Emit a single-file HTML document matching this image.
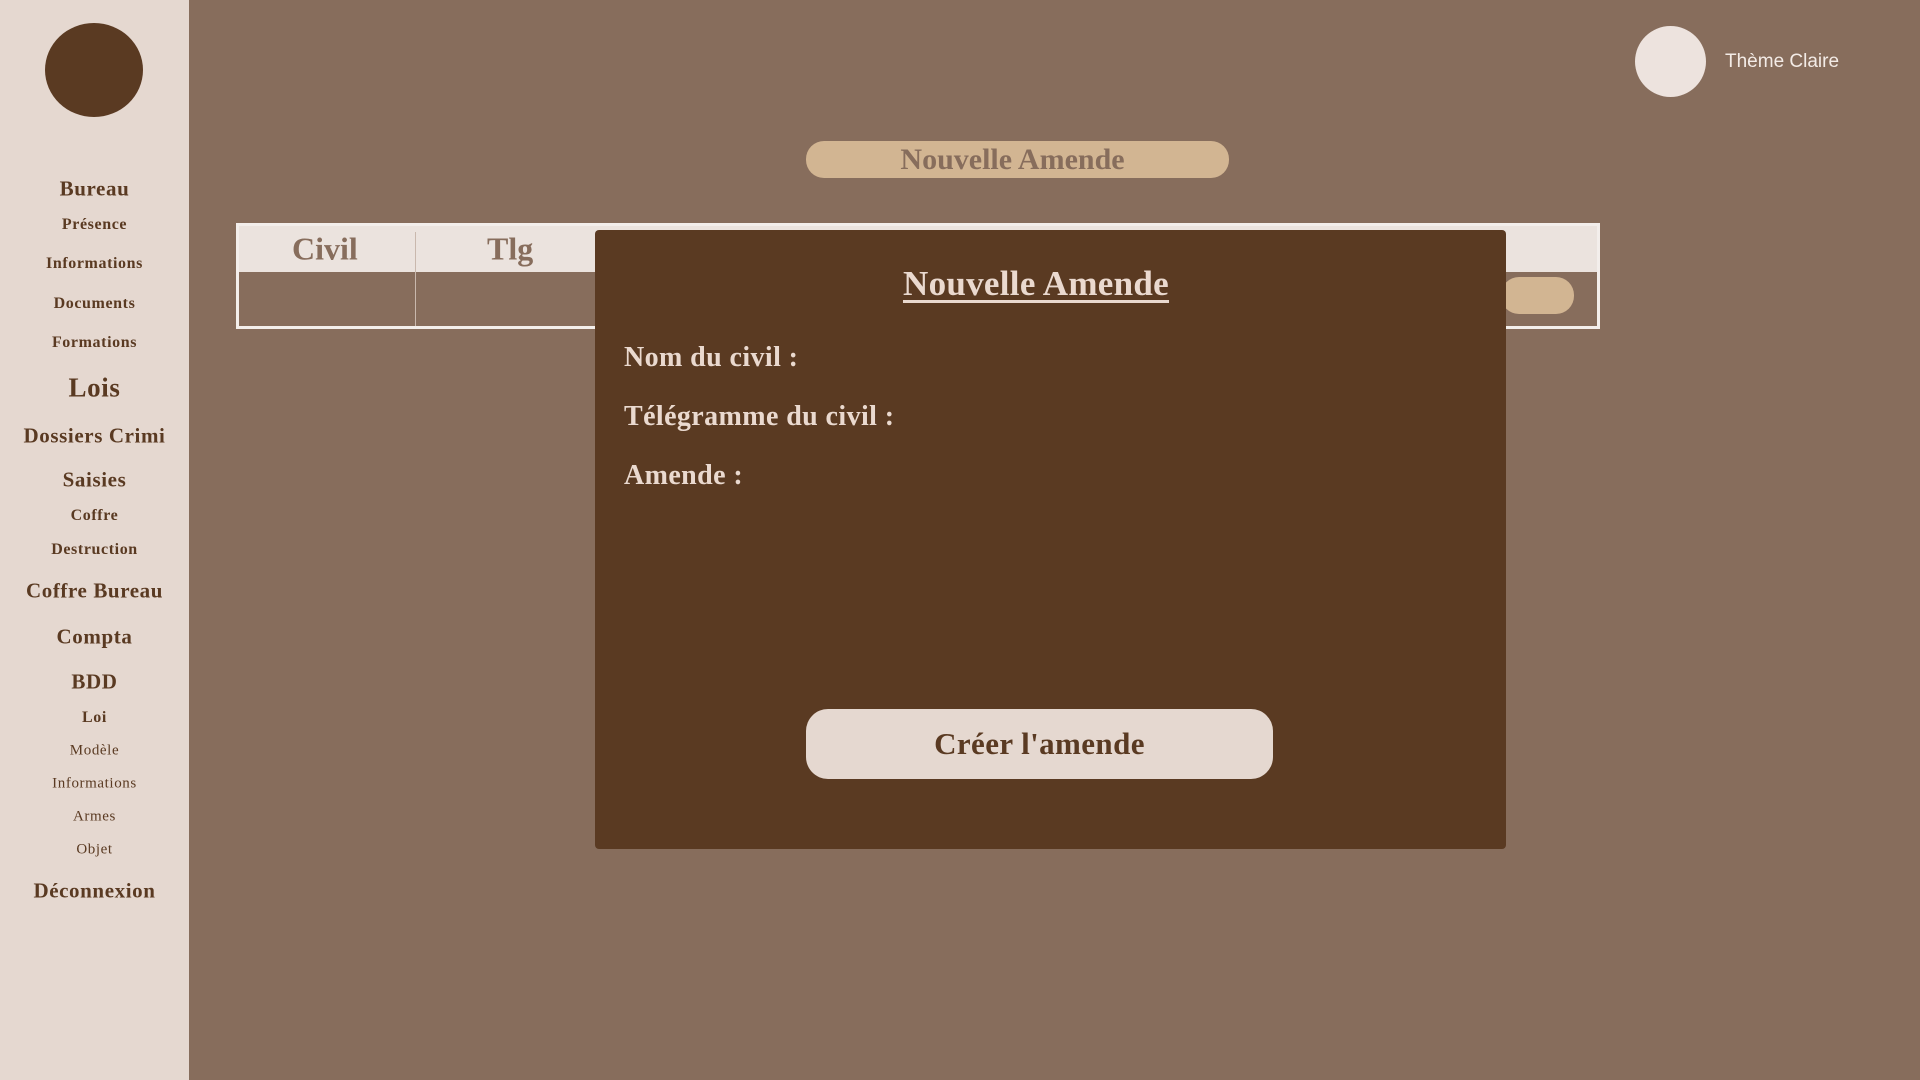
<!DOCTYPE html>
<html><head><meta charset="utf-8"><style>
*{margin:0;padding:0;box-sizing:border-box}
body{width:1920px;height:1080px;background:#876d5c;position:relative;overflow:hidden;font-family:"Liberation Serif",serif;font-weight:bold}
.side{position:absolute;left:0;top:0;width:189px;height:1080px;background:#e5d8d0}
.logo{position:absolute;left:45px;top:23px;width:98px;height:94px;border-radius:50%;background:#5a3a22}
.n{position:absolute;left:0;width:189px;text-align:center;color:#5a3a22;transform:translateY(-50%);white-space:nowrap;letter-spacing:0.6px}
.a{position:absolute;transform:translateY(-50%);white-space:nowrap}
</style></head><body>
<div class="side">
<div class="logo"></div>
<div class="n" style="top:189px;font-size:21px">Bureau</div>
<div class="n" style="top:225px;font-size:16px">Présence</div>
<div class="n" style="top:264px;font-size:16px">Informations</div>
<div class="n" style="top:304px;font-size:16px">Documents</div>
<div class="n" style="top:343px;font-size:16px">Formations</div>
<div class="n" style="top:388px;font-size:27px">Lois</div>
<div class="n" style="top:436px;font-size:21px">Dossiers Crimi</div>
<div class="n" style="top:480px;font-size:21px">Saisies</div>
<div class="n" style="top:516px;font-size:16px">Coffre</div>
<div class="n" style="top:550px;font-size:16px">Destruction</div>
<div class="n" style="top:591px;font-size:21px">Coffre Bureau</div>
<div class="n" style="top:637px;font-size:21px">Compta</div>
<div class="n" style="top:682px;font-size:21px">BDD</div>
<div class="n" style="top:718px;font-size:16px">Loi</div>
<div class="n" style="top:751px;font-size:15px;font-weight:normal">Modèle</div>
<div class="n" style="top:784px;font-size:15px;font-weight:normal">Informations</div>
<div class="n" style="top:817px;font-size:15px;font-weight:normal">Armes</div>
<div class="n" style="top:850px;font-size:15px;font-weight:normal">Objet</div>
<div class="n" style="top:891px;font-size:21px">Déconnexion</div>
</div>
<div style="position:absolute;left:1635px;top:26px;width:71px;height:71px;border-radius:50%;background:#ede3de"></div>
<div class="a" style="left:1725px;top:62px;font-family:'Liberation Sans',sans-serif;font-weight:normal;font-size:19px;color:#f3ebe6">Thème Claire</div>
<div style="position:absolute;left:806px;top:141px;width:423px;height:37px;border-radius:18px;background:#d2b592;color:#876d5c;font-size:30px;text-align:center;line-height:37px;padding-right:10px">Nouvelle Amende</div>
<div style="position:absolute;left:236px;top:223px;width:1364px;height:106px;border:3px solid #f3eeeb">
<div style="position:absolute;left:0;top:0;width:100%;height:46px;background:#ebe3de"></div>
<div style="position:absolute;left:176px;top:6px;width:1px;height:94px;background:#c9b8ad"></div>
<div class="a" style="left:53px;top:23px;font-size:32px;color:#876d5c">Civil</div>
<div class="a" style="left:248px;top:23px;font-size:32px;color:#876d5c">Tlg</div>
<div style="position:absolute;left:1262px;top:51px;width:73px;height:37px;border-radius:18px;background:#d2b592"></div>
</div>
<div style="position:absolute;left:595px;top:230px;width:911px;height:619px;background:#5a3a22;border-radius:4px;color:#ead9cf">
<div class="a" style="left:441px;top:54px;transform:translate(-50%,-50%);font-size:35px;text-decoration:underline;text-underline-offset:5px;letter-spacing:0.3px">Nouvelle Amende</div>
<div class="a" style="left:29px;top:128px;font-size:28px;letter-spacing:0.4px">Nom du civil :</div>
<div class="a" style="left:29px;top:187px;font-size:28px;letter-spacing:0.4px">Télégramme du civil :</div>
<div class="a" style="left:29px;top:246px;font-size:28px;letter-spacing:0.4px">Amende :</div>
<div style="position:absolute;left:211px;top:479px;width:467px;height:70px;border-radius:22px;background:#e5d8d0;color:#5a3a22;font-size:31px;text-align:center;line-height:70px;letter-spacing:0.4px">Créer l'amende</div>
</div>
</body></html>
